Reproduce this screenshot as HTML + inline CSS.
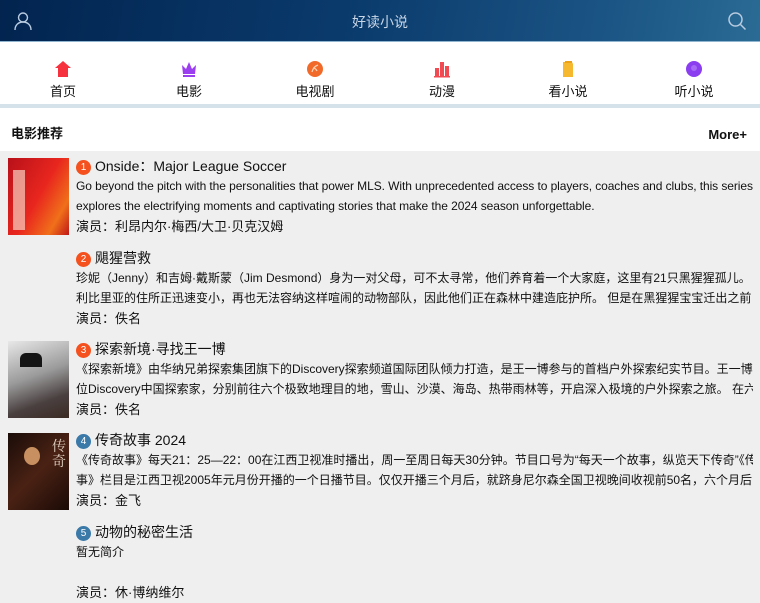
<!DOCTYPE html>
<html><head><meta charset="utf-8"><style>
*{margin:0;padding:0;box-sizing:border-box}
body{width:760px;height:600px;overflow:hidden;background:#efefef;font-family:"Liberation Sans","Noto Sans CJK SC",sans-serif;color:#111;position:relative}
.hd{position:absolute;left:0;top:0;width:760px;height:42px;background:linear-gradient(100deg,#02244f 0%,#0a3a6c 45%,#1b5585 80%,#2a6b94 100%);border-bottom:1px solid #8fb5d0}
.hd .t{position:absolute;left:0;right:0;top:12px;text-align:center;color:#c8d6e6;font-size:14px}
.nav{position:absolute;top:42px;left:0;width:760px;height:62px;background:#fff}
.nav div{position:absolute;top:0;width:126px;text-align:center}
.nav svg{position:absolute;left:54px;top:18px}
.nav span{position:absolute;left:0;right:0;top:39px;font-size:13px;color:#111}
.line{position:absolute;top:104px;left:0;width:760px;height:4px;background:#d6e2ea}
.sec{position:absolute;top:108px;left:0;width:760px;height:43px;background:#fff}
.sec b{position:absolute;left:11px;top:15px;font-size:13px}
.sec i{position:absolute;right:13px;top:19px;font-size:13px;font-style:normal;font-weight:bold}
.it{position:absolute;left:76px;width:677px;overflow:hidden}
.ti{font-size:14px;height:20px;line-height:20px;white-space:nowrap}
.n{display:inline-block;width:15px;height:15px;border-radius:50%;color:#fff;font-size:10px;line-height:15px;text-align:center;vertical-align:1px;margin-right:4px;background:#f4511e}
.n.b{background:#3a79a8}
.d{font-size:12px;line-height:19.5px;white-space:nowrap;overflow:hidden;margin-top:1px}
.a{font-size:13px;line-height:20px;margin-top:1px}
.im{position:absolute;left:8px;width:61px;height:77px}
</style></head><body>
<div class="hd">
<svg style="position:absolute;left:13px;top:11px" width="20" height="20" viewBox="0 0 20 20" fill="none" stroke="#b8cbe0" stroke-width="1.4"><circle cx="10" cy="6.5" r="4.5"/><path d="M2 19c0-5 3.5-8 8-8s8 3 8 8"/></svg>
<div class="t">好读小说</div>
<svg style="position:absolute;left:727px;top:11px" width="20" height="20" viewBox="0 0 20 20" fill="none" stroke="#b8cbe0" stroke-width="1.5"><circle cx="8.5" cy="8.5" r="6.5"/><path d="M13.5 13.5l5 5"/></svg>
</div>
<div class="nav">
<div style="left:0"><svg width="18" height="18" viewBox="0 0 18 18"><path d="M9 1L1 8h3v9h10V8h3z" fill="#f7323f"/></svg><span>首页</span></div>
<div style="left:126px"><svg width="18" height="18" viewBox="0 0 18 18"><path d="M2 5l4 4 3-7 3 7 4-4-1 9H3z" fill="#9b3ef0"/><rect x="3" y="15" width="12" height="2" fill="#9b3ef0"/></svg><span>电影</span></div>
<div style="left:252px"><svg width="18" height="18" viewBox="0 0 18 18"><circle cx="9" cy="9" r="8" fill="#f26a2a"/><path d="M6 12c1-4 3-6 6-7M7 8c2 0 3 1 4 3" stroke="#ffd0b0" stroke-width="1.3" fill="none"/></svg><span>电视剧</span></div>
<div style="left:379px"><svg width="18" height="18" viewBox="0 0 18 18" fill="#f24a52"><rect x="2" y="8" width="4" height="8"/><rect x="7" y="2" width="4" height="14"/><rect x="12" y="6" width="4" height="10"/><rect x="1" y="16" width="16" height="1.5"/></svg><span>动漫</span></div>
<div style="left:505px"><svg width="18" height="18" viewBox="0 0 18 18"><path d="M4 2h9l1 2v13H4z" fill="#f5b82e"/><path d="M6 1h7v2H6z" fill="#e9a21a"/></svg><span>看小说</span></div>
<div style="left:631px"><svg width="18" height="18" viewBox="0 0 18 18"><circle cx="9" cy="9" r="8" fill="#8a3ef0"/><circle cx="9" cy="8" r="3" fill="#a66af5"/></svg><span>听小说</span></div>
</div>
<div class="line"></div>
<div class="sec"><b>电影推荐</b><i>More+</i></div>

<div class="im" style="top:158px;background:linear-gradient(120deg,#b8101a,#e8261e 50%,#f0701a 80%,#c01818)"><div style="position:absolute;left:5px;top:12px;width:12px;height:60px;background:#f7d0c0;opacity:.7"></div></div>
<div class="it" style="top:156px"><div class="ti"><span class="n">1</span>Onside：Major League Soccer</div>
<div class="d" style="letter-spacing:-0.08px">Go beyond the pitch with the personalities that power MLS. With unprecedented access to players, coaches and clubs, this series<br>explores the electrifying moments and captivating stories that make the 2024 season unforgettable.</div>
<div class="a">演员：利昂内尔·梅西/大卫·贝克汉姆</div></div>

<div class="it" style="top:248px"><div class="ti"><span class="n">2</span>飓猩营救</div>
<div class="d">珍妮（Jenny）和吉姆·戴斯蒙（Jim Desmond）身为一对父母，可不太寻常，他们养育着一个大家庭，这里有21只黑猩猩孤儿。 他们在<br>利比里亚的住所正迅速变小，再也无法容纳这样喧闹的动物部队，因此他们正在森林中建造庇护所。 但是在黑猩猩宝宝迁出之前，它们</div>
<div class="a">演员：佚名</div></div>

<div class="im" style="top:341px;background:linear-gradient(160deg,#e8e8e8,#9a9a9a 45%,#4a4040 75%,#3a2a22)"><div style="position:absolute;left:12px;top:12px;width:22px;height:14px;border-radius:6px 6px 0 0;background:#151515"></div></div>
<div class="it" style="top:339px"><div class="ti"><span class="n">3</span>探索新境·寻找王一博</div>
<div class="d">《探索新境》由华纳兄弟探索集团旗下的Discovery探索频道国际团队倾力打造，是王一博参与的首档户外探索纪实节目。王一博跟随六<br>位Discovery中国探索家，分别前往六个极致地理目的地，雪山、沙漠、海岛、热带雨林等，开启深入极境的户外探索之旅。 在六段奇妙</div>
<div class="a">演员：佚名</div></div>

<div class="im" style="top:433px;background:linear-gradient(135deg,#1a0c08,#4a2214 50%,#1a0a06)"><div style="position:absolute;left:16px;top:14px;width:16px;height:18px;border-radius:50%;background:#c89060"></div><div style="position:absolute;left:44px;top:6px;color:#e0d0c0;font-size:14px;line-height:15px;font-family:'Noto Serif CJK SC',serif">传<br>奇</div></div>
<div class="it" style="top:430px"><div class="ti"><span class="n b">4</span>传奇故事 2024</div>
<div class="d">《传奇故事》每天21：25—22：00在江西卫视准时播出，周一至周日每天30分钟。节目口号为“每天一个故事，纵览天下传奇”《传奇故<br>事》栏目是江西卫视2005年元月份开播的一个日播节目。仅仅开播三个月后，就跻身尼尔森全国卫视晚间收视前50名，六个月后，前30</div>
<div class="a">演员：金飞</div></div>

<div class="it" style="top:522px"><div class="ti"><span class="n b">5</span>动物的秘密生活</div>
<div class="d">暂无简介<br>&nbsp;</div>
<div class="a">演员：休·博纳维尔</div></div>
</body></html>
